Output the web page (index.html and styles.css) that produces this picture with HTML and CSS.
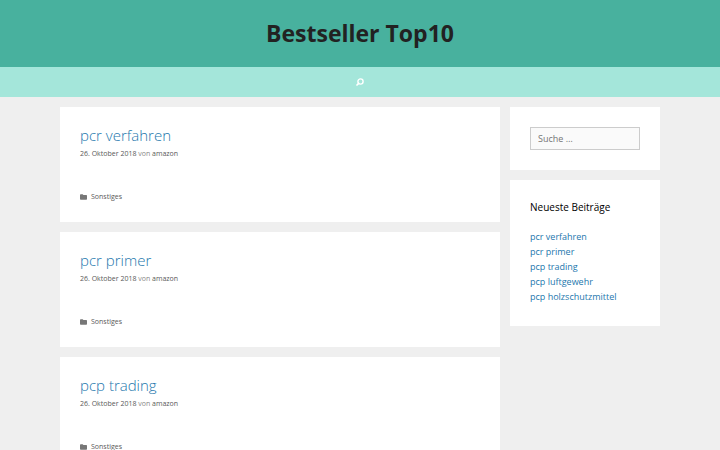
FILE: index.html
```
<!DOCTYPE html>
<html lang="de">
<head>
  <meta charset="UTF-8">
  <title>Bestseller Top10</title>
  <meta name="viewport" content="width=device-width, initial-scale=1.0">
  <link rel="stylesheet" href="styles.css">
</head>
<body>

  <!-- Kopfbereich -->
  <header class="site-header">
    <h1 class="site-title"><a href="#">Bestseller Top10</a></h1>
  </header>

  <!-- Navigation -->
  <nav class="main-nav">
    <a class="search-link" href="#suche" aria-label="Suche">
      <svg viewBox="0 0 16 16" fill="none" stroke="currentColor">
        <circle cx="9" cy="7" r="5.2" stroke-width="2.8"/>
        <path d="M5.4 10.6L2 14" stroke-width="3.4" stroke-linecap="round"/>
      </svg>
    </a>
  </nav>

  <div class="container">
    <!-- Beiträge -->
    <main class="content">
      <article class="box post">
        <h2 class="post-title"><a href="#">pcr verfahren</a></h2>
        <p class="post-meta"><a href="#">26. Oktober 2018</a> von <a href="#">amazon</a></p>
        <footer class="post-footer">
          <svg class="folder" viewBox="0 0 14 12"><path d="M0 2Q0 .5 1.5 .5H5Q6.5 .5 6.5 2H12.5Q14 2 14 3.5V10Q14 11.5 12.5 11.5H1.5Q0 11.5 0 10Z" fill="currentColor"/></svg>
          <a href="#">Sonstiges</a>
        </footer>
      </article>

      <article class="box post">
        <h2 class="post-title"><a href="#">pcr primer</a></h2>
        <p class="post-meta"><a href="#">26. Oktober 2018</a> von <a href="#">amazon</a></p>
        <footer class="post-footer">
          <svg class="folder" viewBox="0 0 14 12"><path d="M0 2Q0 .5 1.5 .5H5Q6.5 .5 6.5 2H12.5Q14 2 14 3.5V10Q14 11.5 12.5 11.5H1.5Q0 11.5 0 10Z" fill="currentColor"/></svg>
          <a href="#">Sonstiges</a>
        </footer>
      </article>

      <article class="box post">
        <h2 class="post-title"><a href="#">pcp trading</a></h2>
        <p class="post-meta"><a href="#">26. Oktober 2018</a> von <a href="#">amazon</a></p>
        <footer class="post-footer">
          <svg class="folder" viewBox="0 0 14 12"><path d="M0 2Q0 .5 1.5 .5H5Q6.5 .5 6.5 2H12.5Q14 2 14 3.5V10Q14 11.5 12.5 11.5H1.5Q0 11.5 0 10Z" fill="currentColor"/></svg>
          <a href="#">Sonstiges</a>
        </footer>
      </article>
    </main>

    <!-- Seitenleiste -->
    <aside class="sidebar">
      <form class="box" role="search">
        <input class="search-field" id="suche" type="search" placeholder="Suche …" aria-label="Suche nach">
      </form>

      <section class="box">
        <h2 class="widget-title">Neueste Beiträge</h2>
        <ul class="recent-posts">
          <li><a href="#">pcr verfahren</a></li>
          <li><a href="#">pcr primer</a></li>
          <li><a href="#">pcp trading</a></li>
          <li><a href="#">pcp luftgewehr</a></li>
          <li><a href="#">pcp holzschutzmittel</a></li>
        </ul>
      </section>
    </aside>
  </div>

</body>
</html>
```
FILE: styles.css
```
* {
  margin: 0;
  padding: 0;
  box-sizing: border-box;
}

body {
  font-family: "Open Sans", sans-serif;
  font-size: 9px;
  line-height: 15px;
  color: #3a3a3a;
  background-color: #efefef;
}

a {
  color: #2477ad;
  text-decoration: none;
}

/* Kopfbereich */
.site-header {
  padding: 20px;
  text-align: center;
  background-color: #48b19e;
}

.site-title {
  font-size: 23px;
  line-height: 27px;
  font-weight: bold;
}

.site-title a {
  color: #222;
}

/* Navigation */
.main-nav {
  display: flex;
  justify-content: center;
  background-color: #a4e6da;
}

.search-link {
  display: flex;
  align-items: center;
  height: 30px;
  padding: 0 10px;
  color: #fff;
}

.search-link svg {
  width: 8px;
  height: 8px;
}

/* Layout */
.container {
  display: flex;
  align-items: flex-start;
  gap: 10px;
  max-width: 600px;
  margin: 0 auto;
  padding: 10px 0;
}

.content {
  flex: 1;
}

.sidebar {
  width: 25%;
}

.box {
  margin-bottom: 10px;
  padding: 20px;
  background-color: #fff;
}

/* Beiträge */
.post-title {
  font-size: 15px;
  line-height: 17px;
  font-weight: 300;
}

.post-meta,
.post-footer {
  font-size: 7px;
  line-height: 11px;
  color: #888;
}

.post-meta {
  margin-top: 4px;
}

.post-meta a,
.post-footer a {
  color: #595959;
}

.post-footer {
  display: flex;
  align-items: center;
  gap: 4px;
  margin-top: 32px;
}

.folder {
  width: 7px;
  height: 6px;
  color: #777;
}

/* Seitenleiste */
.search-field {
  display: block;
  width: 100%;
  height: 23px;
  padding: 0 7px;
  font: inherit;
  color: #666;
  background-color: #fafafa;
  border: 1px solid #ccc;
  border-radius: 0;
  appearance: none;
}

.search-field::placeholder {
  color: #757575;
}

.widget-title {
  margin-bottom: 14px;
  font-size: 10px;
  line-height: 15px;
  font-weight: 400;
  color: #000;
}

.recent-posts {
  padding-bottom: 2px;
  list-style: none;
}
```
